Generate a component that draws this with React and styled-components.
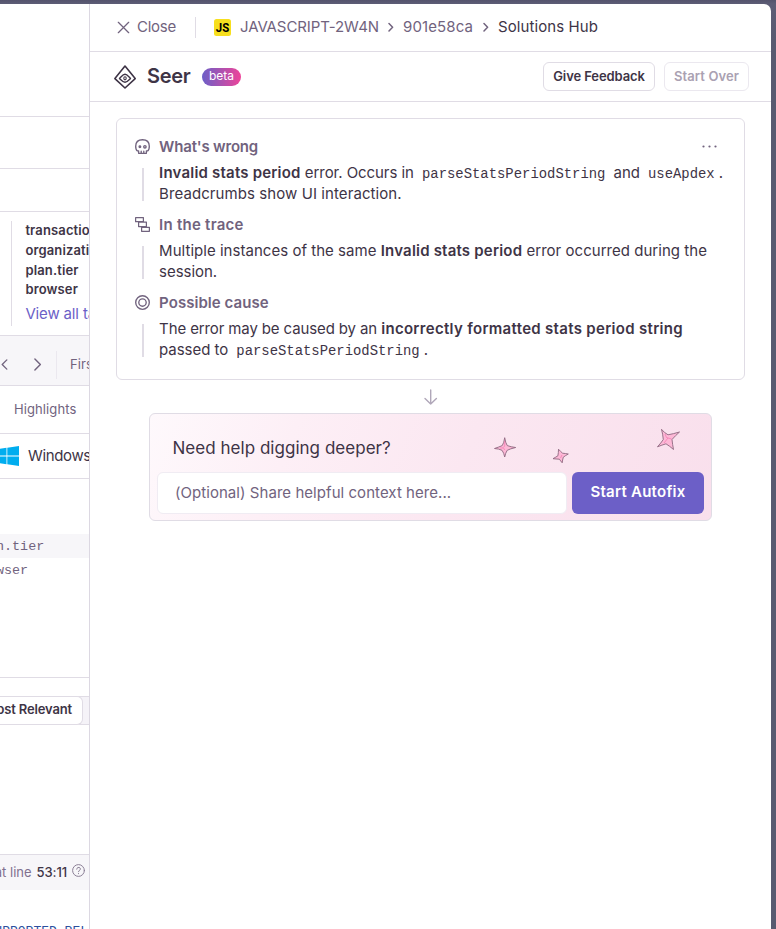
import React from "react";
import styled, { createGlobalStyle } from "styled-components";

const c = {
  text: "#3e3446",
  subtle: "#71637e",
  border: "#e0dce5",
  surface: "#f7f6f9",
  purple: "#6c5fc7",
};
const sans = `Inter, "Noto Sans", sans-serif`;
const mono = `"Liberation Mono", monospace`;

const GlobalStyle = createGlobalStyle`
  *, *::before, *::after { box-sizing: border-box; }
  body { margin: 0; background: #585872; overflow: hidden; }
  svg { display: block; flex: none; }
`;

const Shell = styled.div`
  display: flex;
  height: 929px;
  padding: 4px 5px 0 0;
  overflow: hidden;
  background: linear-gradient(#54536c, #5d5d76 4px, #585a70 40px);
  color: ${c.text};
  font: 400 15px/21px ${sans};
  white-space: nowrap;
`;

/* Issue page, partly covered by the drawer */
const IssuePage = styled.div`
  flex: none;
  width: 89px;
  height: 925px;
  overflow: hidden;
  background: #fff;
`;
const Section = styled.div`
  display: flex;
  align-items: center;
  height: ${(p) => p.$h}px;
  padding-left: ${(p) => p.$pl || 0}px;
  padding-top: ${(p) => p.$pt || 0}px;
  border-bottom: ${(p) => (p.$line ? `1px solid ${c.border}` : "0")};
  background: ${(p) => (p.$fill ? c.surface : "transparent")};
`;
const TagList = styled.div`
  height: 105px;
  margin-left: 11px;
  padding-left: 13.4px;
  border-left: 1px solid ${c.border};
`;
const TagName = styled.div`
  height: 19.8px;
  font: 600 13px/19px ${sans};
  letter-spacing: 0.14px;
`;
const TagLink = styled.div`
  margin-top: 3px;
  color: ${c.purple};
  letter-spacing: -0.15px;
`;
const Small = styled.span`
  font-size: 13px;
  color: ${c.subtle};
  letter-spacing: 0.1px;
`;
const NavGap = styled.div`
  flex: none;
  width: 20px;
`;
const NavRule = styled.div`
  flex: none;
  width: 1px;
  height: 28px;
  margin: 0 13px 0 12px;
  background: #ebe8ef;
`;
const OsName = styled.span`
  margin: 0 0 2px 9px;
  letter-spacing: -0.35px;
`;
const TagRow = styled.div`
  display: flex;
  align-items: center;
  height: 24px;
  padding-top: 1px;
  margin-left: -4px;
  background: ${(p) => (p.$fill ? c.surface : "transparent")};
  color: ${c.subtle};
  font: 13.4px ${mono};
`;
const Segmented = styled.div`
  display: flex;
  height: 29px;
  margin-top: 18px;
  border: solid ${c.border};
  border-width: 1px 0;
  background: #f5f3f8;
`;
const Segment = styled.div`
  display: flex;
  align-items: center;
  justify-content: flex-end;
  width: 83px;
  height: 29px;
  margin-top: -1px;
  padding: 0 10px 2px 0;
  border: 1px solid ${c.border};
  border-left: 0;
  border-radius: 0 6px 6px 0;
  background: #fff;
  font-size: 13px;
  font-weight: 600;
  letter-spacing: -0.15px;
`;
const Frame = styled.div`
  display: flex;
  align-items: center;
  justify-content: flex-end;
  height: 36px;
  margin-top: 129px;
  padding-right: 4px;
  border-top: 1px solid ${c.border};
  background: ${c.surface};
  font-size: 13px;
`;
const FrameText = styled.span`
  color: #80708f;
  margin-right: 5px;
`;
const FramePosition = styled.span`
  margin-right: 5px;
  font-weight: 500;
  letter-spacing: -0.1px;
`;
const HelpSlot = styled.div`
  margin-bottom: 4px;
`;
const CodeLine = styled.div`
  display: flex;
  justify-content: flex-end;
  width: 88px;
  margin-top: 32px;
  color: #2c4f9e;
  font: 13px/20px ${mono};
`;

/* Drawer */
const Drawer = styled.div`
  flex: 1;
  height: 925px;
  overflow: hidden;
  border-left: 1px solid #dcd8e2;
  border-radius: 0 7px 0 0;
  background: #fff;
`;
const CrumbBar = styled.div`
  display: flex;
  align-items: center;
  height: 48px;
  padding: 0 27px 1px;
  border-bottom: 1px solid ${c.border};
`;
const CloseLabel = styled.span`
  width: 58px;
  margin: 0 0 2px 7px;
  color: ${c.subtle};
  letter-spacing: -0.25px;
`;
const CrumbRule = styled.div`
  width: 1px;
  height: 21px;
  margin-right: 18px;
  background: ${c.border};
`;
const Crumb = styled.span`
  color: ${(p) => (p.$current ? c.text : c.subtle)};
  width: ${(p) => p.$w}px;
  margin: 0 0 2px ${(p) => p.$ml || 7}px;
  letter-spacing: ${(p) => p.$ls}px;
`;
const TitleBar = styled.div`
  display: flex;
  align-items: center;
  height: 50px;
  padding: 0 22px 0 24px;
  border-bottom: 1px solid ${c.border};
`;
const Title = styled.h1`
  width: 55px;
  margin: 0 0 1px 11px;
  font: 600 20px/24px ${sans};
  letter-spacing: -0.3px;
`;
const Beta = styled.span`
  height: 18px;
  width: 39px;
  border-radius: 9px;
  background: linear-gradient(90deg, #6c5fc7, #ee4499);
  color: #fff;
  font-size: 12px;
  line-height: 16px;
  text-align: center;
`;
const Actions = styled.div`
  display: flex;
  gap: 9px;
  margin-left: auto;
`;
const Button = styled.button`
  width: ${(p) => p.$w}px;
  height: 29px;
  padding: 0 0 1px;
  border: 1px solid ${c.border};
  border-radius: 6px;
  background: #fff;
  color: ${c.text};
  font: 600 13px/20px ${sans};
  letter-spacing: -0.1px;
  white-space: nowrap;
  &:disabled { color: #aaa1b2; border-color: #ebe8ef; letter-spacing: 0.1px; }
`;
const Body = styled.div`
  display: flex;
  flex-direction: column;
  align-items: center;
  padding: 16px 26px 0;
`;
const InsightCard = styled.div`
  position: relative;
  width: 629px;
  height: 262px;
  padding: 17px 18px;
  border: 1px solid ${c.border};
  border-radius: 6px;
`;
const Insight = styled.section`
  height: 78px;
`;
const InsightHead = styled.div`
  display: flex;
  align-items: center;
  gap: 9.1px;
  height: 21px;
  color: ${c.subtle};
  font-weight: 600;
  letter-spacing: ${(p) => p.$ls}px;
`;
const InsightBody = styled.div`
  display: flex;
  height: 42px;
  margin: 5px 0 0 7px;
`;
const Bar = styled.div`
  width: 2px;
  height: 33px;
  margin: 6px 15.1px 0 0;
  background: ${c.border};
`;
const Line = styled.div`
  display: flex;
  height: 21px;
  letter-spacing: ${(p) => p.$ls || 0}px;
  white-space: pre;
`;
const Strong = styled.strong`
  font-weight: 600;
  letter-spacing: ${(p) => p.$ls || 0}px;
`;
const Code = styled.code`
  padding: 0 4px;
  font: 13.9px/24px ${mono};
  letter-spacing: 0;
`;
const More = styled.div`
  position: absolute;
  right: 27px;
  top: 26px;
`;
const Arrow = styled.div`
  margin: 9px 0 8px;
`;
const AutofixCard = styled.div`
  position: relative;
  width: 563px;
  height: 108px;
  padding: 22px 7px 6px;
  border: 1px solid ${c.border};
  border-radius: 6px;
  background: linear-gradient(112deg, #fef9fc, #fdeff6 25%, #fbe7f1 55%, #f9dfec);
`;
const Prompt = styled.div`
  height: 36px;
  padding-left: 15.5px;
  font-size: 17px;
  line-height: 24px;
  letter-spacing: 0.03px;
`;
const PromptRow = styled.div`
  display: flex;
  gap: 5px;
`;
const ContextInput = styled.input`
  width: 410px;
  height: 42px;
  padding: 0 17px 1px;
  border: 1px solid #f0ecf3;
  border-radius: 6px;
  background: #fff;
  font: 400 15px/20px ${sans};
  letter-spacing: 0.05px;
  &::placeholder { color: ${c.subtle}; opacity: 1; }
`;
const StartButton = styled.button`
  width: 132px;
  height: 42px;
  padding: 0 0 2px;
  border: 0;
  border-radius: 6px;
  background: ${c.purple};
  color: #fff;
  font: 600 15px/20px ${sans};
  letter-spacing: 0.25px;
`;
const Sparkles = styled.svg`
  position: absolute;
  left: 340px;
  top: 10px;
`;

const Chevron = ({ size = 10, left, w = 1.5 }) => (
  <svg width={size} height={size} viewBox="0 0 10 10" fill="none" stroke="#71637e" strokeWidth={w} strokeLinecap="round" strokeLinejoin="round">
    <path d={left ? "M6.2 .8 2 5 6.2 9.2" : "M3 .8 7.2 5 3 9.2"} />
  </svg>
);
const CrumbChevron = () => (
  <svg width="10" height="10" viewBox="0 0 10 10" fill="none" stroke="#71637e" strokeWidth="1.5" strokeLinecap="round" strokeLinejoin="round">
    <path d="M3 1.6 6.6 5.3 3 9" />
  </svg>
);
const CloseIcon = () => (
  <svg width="13" height="13" viewBox="0 0 13 13" stroke="#71637e" strokeWidth="1.25" strokeLinecap="round">
    <path d="M1.3 1.3 11.7 11.7M11.7 1.3 1.3 11.7" />
  </svg>
);
const JsIcon = () => (
  <svg width="17" height="17" viewBox="0 0 17 17">
    <rect width="17" height="17" rx="2.5" fill="#f7df1e" />
    <text x="1.8" y="13" fontFamily="Roboto, sans-serif" fontWeight="700" fontSize="13" textLength="13.4" lengthAdjust="spacingAndGlyphs">JS</text>
  </svg>
);
const SeerIcon = () => (
  <svg width="22" height="24" viewBox="0 0 22 24" fill="none" stroke="#3e3446" strokeWidth="1.6" strokeLinejoin="round">
    <path d="M11 1 21.2 13.6 11 23 .9 13.6Z" />
    <path d="M5.5 13.4C7.6 11.4 9 9.3 11 9.3s3.4 2.1 5.5 4.1C14.4 15.4 13 17.2 11 17.2s-3.4-1.8-5.5-3.8Z" strokeWidth="1.4" />
    <ellipse cx="11" cy="13.3" rx="1.2" ry="1.6" strokeWidth="1.1" />
  </svg>
);
const SkullIcon = () => (
  <svg width="15" height="15" viewBox="0 0 15 15" fill="none" stroke="#71637e" strokeWidth="1.35" strokeLinejoin="round" strokeLinecap="round">
    <path d="M3.6 14.3V11.8H2.3C1.2 11.2.7 9.6.7 7.3.7 3.2 3.1.7 7.5.7s6.8 2.5 6.8 6.6c0 2.3-.5 3.9-1.6 4.5h-1.3v2.5ZM6.2 14v-1.8M8.8 14v-1.8" />
    <circle cx="4.9" cy="7.8" r=".8" />
    <circle cx="9.9" cy="7.8" r="1.2" />
  </svg>
);
const SpanIcon = () => (
  <svg width="15" height="15" viewBox="0 0 15 15" fill="none" stroke="#71637e" strokeWidth="1.25" strokeLinejoin="round">
    <path d="M.6.7h7.8v4H.6ZM6.6 10.3h7.8v4H6.6ZM3.6 5v4.6h7.8V5Z" />
  </svg>
);
const FocusIcon = () => (
  <svg width="15" height="15" viewBox="0 0 15 15" fill="none" stroke="#71637e" strokeWidth="1.35">
    <circle cx="7.5" cy="7.5" r="6.8" />
    <circle cx="7.5" cy="7.5" r="3.7" />
  </svg>
);
const ArrowDown = () => (
  <svg width="14" height="16" viewBox="0 0 14 16" fill="none" stroke="#b0a7b9" strokeWidth="1.4" strokeLinecap="round" strokeLinejoin="round">
    <path d="M6.7 1v14M1 9.4 6.7 15l5.7-5.6" />
  </svg>
);
const MoreIcon = () => (
  <svg width="15" height="3" viewBox="0 0 15 3" fill="#71637e">
    <circle cx="1.5" cy="1.5" r="1.1" />
    <circle cx="7.5" cy="1.5" r="1.1" />
    <circle cx="13.5" cy="1.5" r="1.1" />
  </svg>
);
const WindowsIcon = () => (
  <svg width="19" height="20" viewBox="0 0 19 20" fill="#00adef">
    <path d="M0 2.7 6.5 1.8V9.5H0ZM7.3 1.7 19 0v9.5H7.3ZM0 10.4h6.5v7.8L0 17.3ZM7.3 10.4H19V20L7.3 18.3Z" />
  </svg>
);
const HelpIcon = () => (
  <svg width="13" height="13" viewBox="0 0 13 13" fill="none" stroke="#8b7f96" strokeLinecap="round">
    <circle cx="6.5" cy="6.5" r="5.9" />
    <path d="M4.7 5.2c0-2.6 3.7-2.3 3.7-.2 0 1.4-1.9 1.3-1.9 2.7M6.5 9.5v.2" />
  </svg>
);
const SparkleArt = () => (
  <Sparkles width="200" height="46" viewBox="490 424 200 46" fill="#fdb8d6" stroke="#8f6880" strokeWidth=".9" strokeLinejoin="round">
    <path d="M504.7 437.7Q505.5 443 507.3 445.6Q511 447 515.7 447.5Q510 448.8 507.2 450.3Q505.5 453 504.7 457Q504 453 502 450.3Q499 448.8 494.5 448.5Q499 447 502.2 445.6Q504 443 504.7 437.7Z" />
    <path d="M558.5 449.2Q560.5 451.5 562.6 453.2Q565.5 453.5 568.3 454Q565.5 455.5 563.3 457.2Q562.5 460 562.2 462.8Q560.5 460.8 559.4 459.2Q556 459 553 458.7Q556 457 557.9 455.8Q558.5 452.5 558.5 449.2Z" />
    <path d="M661.5 429.3Q664.5 433 668 434.8Q673.5 433.8 679.5 432Q675.5 435.5 672 439.5Q672.5 444.5 673.5 449.5Q669.5 446 666 443.8Q662 445 657.5 446.8Q661 443 663.3 439.5Q662.8 434 661.5 429.3Z" />
    <g fill="none" stroke="#f06ca8" strokeWidth=".6">
      <path d="M504.7 441v5l-1.5 1.5 1.5 2.5M500 448h3M562 455l-1.5 3M665 434l1.5 3.5 5 1.5M664 443l4-5" />
    </g>
  </Sparkles>
);

export default function App() {
  return (
    <>
      <GlobalStyle />
      <Shell>
        <IssuePage>
          <Section $h={113} $line />
          <Section $h={52} $line />
          <Section $h={43} $line />
          <Section $h={124} $line>
            <TagList>
              <TagName>transaction</TagName>
              <TagName>organization</TagName>
              <TagName>plan.tier</TagName>
              <TagName>browser</TagName>
              <TagLink>View all tags</TagLink>
            </TagList>
          </Section>
          <Section $h={50} $pt={8} $line $fill>
            <Chevron left size={11} w={1.2} />
            <NavGap />
            <Chevron size={13} w={1.1} />
            <NavRule />
            <Small>First</Small>
          </Section>
          <Section $h={48} $pl={14} $line><Small>Highlights</Small></Section>
          <Section $h={45} $line>
            <WindowsIcon />
            <OsName>Windows</OsName>
          </Section>
          <Section $h={55} />
          <TagRow $fill>n.tier</TagRow>
          <TagRow>wser</TagRow>
          <Section $h={96} $line />
          <Segmented><Segment>Most Relevant</Segment></Segmented>
          <Frame>
            <FrameText>at line</FrameText>
            <FramePosition>53:11</FramePosition>
            <HelpSlot><HelpIcon /></HelpSlot>
          </Frame>
          <CodeLine>UNSUPPORTED_REL</CodeLine>
        </IssuePage>

        <Drawer>
          <CrumbBar>
            <CloseIcon />
            <CloseLabel>Close</CloseLabel>
            <CrumbRule />
            <JsIcon />
            <Crumb $w={146} $ml={9} $ls={-0.1}>JAVASCRIPT-2W4N</Crumb>
            <CrumbChevron />
            <Crumb $w={78} $ls={0.11}>901e58ca</Crumb>
            <CrumbChevron />
            <Crumb $current $w={110} $ls={0.09}>Solutions Hub</Crumb>
          </CrumbBar>
          <TitleBar>
            <SeerIcon />
            <Title>Seer</Title>
            <Beta>beta</Beta>
            <Actions>
              <Button $w={112}>Give Feedback</Button>
              <Button $w={85} disabled>Start Over</Button>
            </Actions>
          </TitleBar>
          <Body>
            <InsightCard>
              <More><MoreIcon /></More>
              <Insight>
                <InsightHead $ls={-0.18}><SkullIcon />What's wrong</InsightHead>
                <InsightBody>
                  <Bar />
                  <div>
                    <Line $ls={-0.06}><Strong $ls={0.2}>Invalid stats period</Strong> error. Occurs in <Code>parseStatsPeriodString</Code> and <Code>useApdex</Code>.</Line>
                    <Line $ls={0.08}>Breadcrumbs show UI interaction.</Line>
                  </div>
                </InsightBody>
              </Insight>
              <Insight>
                <InsightHead $ls={0.25}><SpanIcon />In the trace</InsightHead>
                <InsightBody>
                  <Bar />
                  <div>
                    <Line $ls={0.03}>Multiple instances of the same <Strong $ls={0.2}>Invalid stats period</Strong> error occurred during the</Line>
                    <Line $ls={-0.05}>session.</Line>
                  </div>
                </InsightBody>
              </Insight>
              <Insight>
                <InsightHead $ls={0.05}><FocusIcon />Possible cause</InsightHead>
                <InsightBody>
                  <Bar />
                  <div>
                    <Line $ls={-0.12}>The error may be caused by an <Strong $ls={0.31}>incorrectly formatted stats period string</Strong></Line>
                    <Line $ls={-0.05}>passed to <Code>parseStatsPeriodString</Code>.</Line>
                  </div>
                </InsightBody>
              </Insight>
            </InsightCard>
            <Arrow><ArrowDown /></Arrow>
            <AutofixCard>
              <SparkleArt />
              <Prompt>Need help digging deeper?</Prompt>
              <PromptRow>
                <ContextInput placeholder="(Optional) Share helpful context here..." />
                <StartButton>Start Autofix</StartButton>
              </PromptRow>
            </AutofixCard>
          </Body>
        </Drawer>
      </Shell>
    </>
  );
}
